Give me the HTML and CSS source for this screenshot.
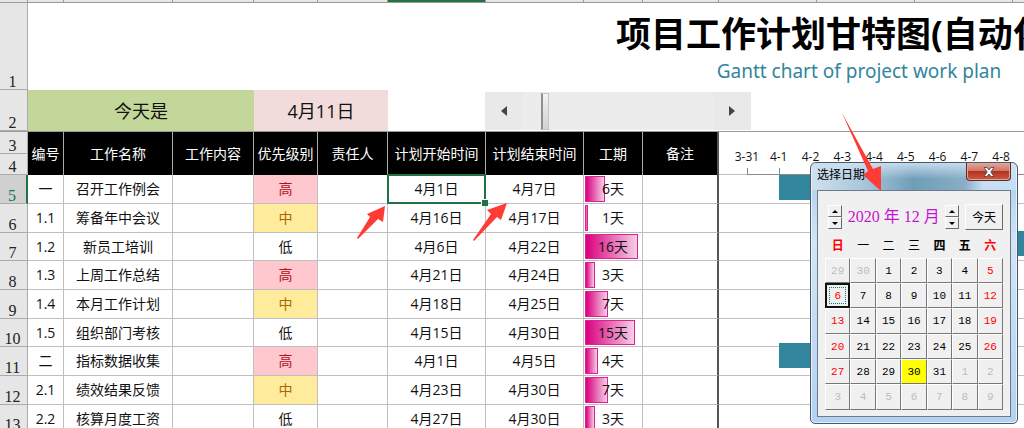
FILE: index.html
```html
<!DOCTYPE html>
<html lang="zh-CN">
<head>
    <meta charset="UTF-8">
    <meta name="viewport" content="width=device-width, initial-scale=1.0">
    <title>项目工作计划甘特图</title>
    <link rel="stylesheet" href="styles.css">
</head>
<body>
    <div class="col-heads">
        <span class="w-num"></span><span class="w-id"></span><span class="w-name"></span><span class="w-content"></span><span class="w-level"></span><span class="w-owner"></span><span class="w-date active"></span><span class="w-date"></span><span class="w-days"></span><span class="w-note"></span><span class="w-date"></span><span class="w-date"></span><span class="w-date"></span>
    </div>

    <header class="row row-title">
        <div class="row-num">1</div>
        <div class="titles">
            <h1>项目工作计划甘特图(自动化)</h1>
            <p>Gantt chart of project work plan</p>
        </div>
    </header>

    <div class="row row-today">
        <div class="row-num">2</div>
        <div class="today-label">今天是</div>
        <div class="today-date">4月11日</div>
        <div class="scroller">
            <button type="button" aria-label="向左"><svg width="6" height="10" viewBox="0 0 6 10"><path d="M6 0v10L0 5z" fill="#444"/></svg></button>
            <input type="range" min="0" max="100" value="10" aria-label="滚动日期">
            <button type="button" aria-label="向右"><svg width="6" height="10" viewBox="0 0 6 10"><path d="M0 0v10l6-5z" fill="#444"/></svg></button>
        </div>
    </div>

    <main class="plan">
        <table class="tasks">
            <colgroup>
                <col class="w-num"><col class="w-id"><col class="w-name"><col class="w-content"><col class="w-level"><col class="w-owner"><col class="w-date"><col class="w-date"><col class="w-days"><col class="w-note">
            </colgroup>
            <thead>
                <tr>
                    <th class="row-num">3</th>
                    <th rowspan="2">编号</th>
                    <th rowspan="2">工作名称</th>
                    <th rowspan="2">工作内容</th>
                    <th rowspan="2">优先级别</th>
                    <th rowspan="2">责任人</th>
                    <th rowspan="2">计划开始时间</th>
                    <th rowspan="2">计划结束时间</th>
                    <th rowspan="2">工期</th>
                    <th rowspan="2">备注</th>
                </tr>
                <tr><th class="row-num">4</th></tr>
            </thead>
            <tbody>
                <tr><th class="row-num active">5</th><td>一</td><td>召开工作例会</td><td></td><td class="high">高</td><td></td><td class="selected">4月1日</td><td>4月7日</td><td class="days"><i style="width: 34%"></i><span>6天</span></td><td></td></tr>
                <tr><th class="row-num">6</th><td>1.1</td><td>筹备年中会议</td><td></td><td class="mid">中</td><td></td><td>4月16日</td><td>4月17日</td><td class="days"><i style="width: 5%"></i><span>1天</span></td><td></td></tr>
                <tr><th class="row-num">7</th><td>1.2</td><td>新员工培训</td><td></td><td>低</td><td></td><td>4月6日</td><td>4月22日</td><td class="days"><i style="width: 92%"></i><span>16天</span></td><td></td></tr>
                <tr><th class="row-num">8</th><td>1.3</td><td>上周工作总结</td><td></td><td class="high">高</td><td></td><td>4月21日</td><td>4月24日</td><td class="days"><i style="width: 17%"></i><span>3天</span></td><td></td></tr>
                <tr><th class="row-num">9</th><td>1.4</td><td>本月工作计划</td><td></td><td class="mid">中</td><td></td><td>4月18日</td><td>4月25日</td><td class="days"><i style="width: 40%"></i><span>7天</span></td><td></td></tr>
                <tr><th class="row-num">10</th><td>1.5</td><td>组织部门考核</td><td></td><td>低</td><td></td><td>4月15日</td><td>4月30日</td><td class="days"><i style="width: 86%"></i><span>15天</span></td><td></td></tr>
                <tr><th class="row-num">11</th><td>二</td><td>指标数据收集</td><td></td><td class="high">高</td><td></td><td>4月1日</td><td>4月5日</td><td class="days"><i style="width: 23%"></i><span>4天</span></td><td></td></tr>
                <tr><th class="row-num">12</th><td>2.1</td><td>绩效结果反馈</td><td></td><td class="mid">中</td><td></td><td>4月23日</td><td>4月30日</td><td class="days"><i style="width: 40%"></i><span>7天</span></td><td></td></tr>
                <tr><th class="row-num">13</th><td>2.2</td><td>核算月度工资</td><td></td><td>低</td><td></td><td>4月27日</td><td>4月30日</td><td class="days"><i style="width: 17%"></i><span>3天</span></td><td></td></tr>
            </tbody>
        </table>

        <section class="chart">
            <div class="axis">
                <span>3-31</span><span>4-1</span><span>4-2</span><span>4-3</span><span>4-4</span><span>4-5</span><span>4-6</span><span>4-7</span><span>4-8</span>
            </div>
            <div class="lines">
                <div></div><div></div><div></div><div></div><div></div><div></div><div></div><div></div><div></div>
            </div>
            <!-- 每列一天，从 3-31 开始 -->
            <div class="bars">
                <div><i style="margin-left: 16.7%; width: 66.7%"></i></div>
                <div></div>
                <div><i style="margin-left: 72.2%; width: 40%"></i></div>
                <div></div>
                <div></div>
                <div></div>
                <div><i style="margin-left: 16.7%; width: 44.4%"></i></div>
            </div>
        </section>
    </main>

    <section class="dialog" role="dialog" aria-labelledby="dialog-title">
        <div class="dialog-bar">
            <h2 id="dialog-title">选择日期</h2>
            <button type="button" class="close" aria-label="关闭">
                <svg width="12" height="10" viewBox="0 0 12 10"><path d="M1 .5h3L6 3 8 .5h3L7.8 5 11 9.500H8L6 7 4 9.500H1L4.200 5z" fill="#fff" stroke="#5b5260" stroke-width="1"/></svg>
            </button>
        </div>
        <div class="dialog-body">
            <div class="month">
                <div class="spin">
                    <button type="button" aria-label="下一年"><svg width="6" height="3" viewBox="0 0 6 3"><path d="M3 0l3 3H0z"/></svg></button>
                    <button type="button" aria-label="上一年"><svg width="6" height="3" viewBox="0 0 6 3"><path d="M0 0h6L3 3z"/></svg></button>
                </div>
                <span class="month-text">2020 年 12 月</span>
                <div class="spin">
                    <button type="button" aria-label="下个月"><svg width="6" height="3" viewBox="0 0 6 3"><path d="M3 0l3 3H0z"/></svg></button>
                    <button type="button" aria-label="上个月"><svg width="6" height="3" viewBox="0 0 6 3"><path d="M0 0h6L3 3z"/></svg></button>
                </div>
                <button type="button" class="today">今天</button>
            </div>
            <table class="calendar">
                <thead>
                    <tr><th class="rest">日</th><th class="thin">一</th><th class="thin">二</th><th class="thin">三</th><th>四</th><th>五</th><th class="rest">六</th></tr>
                </thead>
                <tbody>
                    <tr><td><button class="other">29</button></td><td><button class="other">30</button></td><td><button>1</button></td><td><button>2</button></td><td><button>3</button></td><td><button>4</button></td><td><button class="rest">5</button></td></tr>
                    <tr><td><button class="rest focused">6</button></td><td><button>7</button></td><td><button>8</button></td><td><button>9</button></td><td><button>10</button></td><td><button>11</button></td><td><button class="rest">12</button></td></tr>
                    <tr><td><button class="rest">13</button></td><td><button>14</button></td><td><button>15</button></td><td><button>16</button></td><td><button>17</button></td><td><button>18</button></td><td><button class="rest">19</button></td></tr>
                    <tr><td><button class="rest">20</button></td><td><button>21</button></td><td><button>22</button></td><td><button>23</button></td><td><button>24</button></td><td><button>25</button></td><td><button class="rest">26</button></td></tr>
                    <tr><td><button class="rest">27</button></td><td><button>28</button></td><td><button>29</button></td><td><button class="now">30</button></td><td><button>31</button></td><td><button class="other">1</button></td><td><button class="other">2</button></td></tr>
                    <tr><td><button class="other">3</button></td><td><button class="other">4</button></td><td><button class="other">5</button></td><td><button class="other">6</button></td><td><button class="other">7</button></td><td><button class="other">8</button></td><td><button class="other">9</button></td></tr>
                </tbody>
            </table>
        </div>
    </section>

    <svg class="arrow arrow-start" width="28" height="34" viewBox="0 0 28 34"><path d="M28 0L26 16 21 13 1 33 0 32 13 11 10 8z"/></svg>
    <svg class="arrow arrow-end" width="34" height="38" viewBox="0 0 34 38"><path d="M34 0L28 17 24 14 1 38 0 37 18 11 14 7z"/></svg>
    <svg class="arrow arrow-dialog" width="40" height="78" viewBox="0 0 40 78"><path d="M0 0L31 56 39 53V78L21 62 26 58z"/></svg>
</body>
</html>
```
FILE: styles.css
```css
* {
    box-sizing: border-box;
}
body {
    margin: 0;
    height: 100vh;
    overflow: hidden;
    position: relative;
    background: #fff;
    color: #111;
    font-family: "Open Sans", "Noto Sans CJK SC", sans-serif;
    font-size: 14px;
}
button {
    margin: 0;
    padding: 0;
    border: 0;
    display: flex;
    align-items: center;
    justify-content: center;
    font-family: inherit;
    color: #000;
}

/* column widths */
.w-num { width: 28px; }
.w-id { width: 36px; }
.w-name { width: 109px; }
.w-content { width: 81px; }
.w-level { width: 64px; }
.w-owner { width: 70px; }
.w-date { width: 98px; }
.w-days { width: 59px; }
.w-note { width: 76px; }

.col-heads {
    display: flex;
    height: 3px;
    overflow: hidden;
    background: #e6e6e6;
    border-bottom: 1px solid #9b9b9b;
}
.col-heads span {
    flex: none;
    border-right: 1px solid #9b9b9b;
}
.col-heads .active {
    height: 3px;
    background: #217346;
}

.row {
    display: flex;
}
.row-num {
    flex: none;
    width: 28px;
    display: flex;
    align-items: flex-end;
    justify-content: center;
    padding-right: 2px;
    background: #e6e6e6;
    border-right: 1px solid #ababab;
    border-bottom: 1px solid #ababab;
    font-family: "Liberation Serif", serif;
    font-size: 16px;
    line-height: 14px;
    color: #222;
}
.row-title {
    height: 87px;
}
.titles {
    flex: 1;
    min-width: 0;
    overflow: hidden;
    padding: 7px 0 0 588px;
    white-space: nowrap;
}
.titles h1 {
    margin: 0;
    font-size: 35px;
    line-height: 48px;
    color: #000;
}
.titles p {
    margin: 0;
    width: 486px;
    text-align: center;
    font-family: "Noto Sans", sans-serif;
    font-size: 19px;
    line-height: 26px;
    color: #31859c;
}
.row-today {
    height: 42px;
    border-bottom: 1px solid #999;
}
.today-label,
.today-date {
    display: flex;
    align-items: center;
    justify-content: center;
    padding-bottom: 2px;
    font-size: 18px;
}
.today-label {
    width: 226px;
    background: #c4d79b;
}
.today-date {
    width: 134px;
    background: #f2dcdb;
}
.scroller {
    display: flex;
    width: 266px;
    height: 38px;
    margin: 2px 0 0 97px;
    background: #ececec;
}
.scroller button {
    width: 38px;
    background: #e9e9e9;
}
.scroller input {
    flex: 1;
    min-width: 0;
    margin: 0;
    appearance: none;
    background: none;
}
.scroller input::-webkit-slider-thumb {
    appearance: none;
    width: 8px;
    height: 37px;
    border: 1px solid #c4c4c4;
    border-left: 2px solid #8f8f8f;
    background: linear-gradient(#f2f2f2, #d2d2d2);
}

.plan {
    display: flex;
    align-items: flex-start;
}
.tasks {
    flex: none;
    width: 719px;
    table-layout: fixed;
    border-collapse: separate;
    border-spacing: 0;
}
.tasks th,
.tasks td {
    padding: 0;
    text-align: center;
    font-weight: normal;
    line-height: 20px;
}
.tasks thead tr {
    height: 21px;
}
.tasks thead tr:first-child {
    height: 22px;
}
.tasks thead th {
    background: #000;
    color: #fff;
    border-right: 1px solid #ababab;
}
.tasks thead th:last-child {
    border-right: 2px solid #555;
}
.tasks tbody tr {
    height: 29px;
}
.tasks tbody tr:nth-child(3n) {
    height: 28px;
}
.tasks td {
    border-right: 1px solid #bfbfbf;
    border-bottom: 1px solid #bfbfbf;
}
.tasks td:last-child {
    border-right: 2px solid #555;
}
.tasks .row-num,
.tasks thead .row-num:last-child {
    display: table-cell;
    vertical-align: bottom;
    padding-right: 2px;
    line-height: 14px;
    background: #e6e6e6;
    color: #222;
    border-right: 1px solid #ababab;
    border-bottom: 1px solid #ababab;
}
.tasks .row-num.active {
    background: #d0d0d0;
    color: #217346;
    border-right: 2px solid #217346;
}
.tasks .high {
    background: #ffc7ce;
    color: #b3101c;
}
.tasks .mid {
    background: #ffeb9c;
    color: #a86a00;
}
.selected {
    position: relative;
}
.selected::before {
    content: "";
    position: absolute;
    inset: -1px;
    border: 2px solid #217346;
}
.selected::after {
    content: "";
    position: absolute;
    right: -3px;
    bottom: -3px;
    width: 6px;
    height: 6px;
    background: #217346;
    border: 1px solid #fff;
    border-width: 1px 0 0 1px;
}

/* data bars behind the day count */
.days {
    position: relative;
}
.days i {
    position: absolute;
    left: 1px;
    top: 1px;
    bottom: 1px;
    border: 1px solid #e0218f;
    background: linear-gradient(90deg, #d9007e, #f6cfe7);
}
.days span {
    position: relative;
}

.chart {
    flex: 1;
    min-width: 0;
    position: relative;
    overflow: hidden;
}
.axis {
    display: flex;
    height: 43px;
    padding: 16px 7px 0 12px;
    border-bottom: 1px solid #bfbfbf;
    font-size: 12px;
    line-height: 18px;
}
.axis span {
    flex: 1;
    min-width: 0;
    position: relative;
    display: flex;
    justify-content: center;
}
/* tick mark and the axis line running to the next day */
.axis span::after {
    content: "";
    position: absolute;
    left: 50%;
    bottom: -1px;
    width: 100%;
    height: 6px;
    border-left: 1px solid #8a8a8a;
    border-bottom: 1px solid #8a8a8a;
}
.lines div {
    height: 29px;
    border-bottom: 1px solid #bfbfbf;
}
.lines div:nth-child(3n) {
    height: 28px;
}
.bars {
    position: absolute;
    top: 43px;
    left: 12px;
    right: 7px;
}
.bars div {
    height: 28px;
}
.bars i {
    display: block;
    height: 25px;
    background: #31859c;
}

.dialog {
    position: absolute;
    left: 810px;
    top: 162px;
    width: 208px;
    padding: 0 6px 6px;
    border: 1px solid #4b5866;
    border-radius: 6px 6px 5px 5px;
    background: linear-gradient(#c2d8ec, #b9d3ee 30px, #d3e5f7 80px, #b2d1f2);
    box-shadow: inset 0 0 0 1px #e6f1fb;
}
.dialog-bar {
    display: flex;
    justify-content: space-between;
    height: 27px;
    margin: 0 -5px;
    border-radius: 5px 5px 0 0;
    background:
        linear-gradient(rgba(206, 225, 242, 0.9), rgba(206, 225, 242, 0) 60%),
        linear-gradient(90deg, #cfe0ee, #a9c6d9 25%, #6f9db8 50%, #8aaec6 75%, #c7dff4 84%);
}
.dialog-bar h2 {
    margin: 0;
    padding-left: 5px;
    font-size: 12px;
    font-weight: normal;
    line-height: 24px;
    color: #000;
}
.close {
    width: 45px;
    height: 18px;
    margin-right: 5px;
    border: 1px solid #5a2a2a;
    border-top: 0;
    border-radius: 0 0 4px 4px;
    background: linear-gradient(#e2a79c, #cf7567 45%, #b3331f 50%, #cf5a40);
    box-shadow: inset 0 0 0 1px #e3a596;
}
.dialog-body {
    padding: 13px 7px 6px;
    border: 1px solid #6b7a88;
    background: #f0f0f0;
}
.month {
    display: flex;
    align-items: center;
    justify-content: space-between;
    padding-left: 3px;
}
.month button {
    background: #f0f0f0;
    border: 1px solid;
    border-color: #fff #696969 #696969 #fff;
}
.spin {
    display: flex;
    flex-direction: column;
}
.spin button {
    width: 14px;
    height: 12px;
}
.month-text {
    font-family: "Liberation Serif", "Noto Sans CJK SC", serif;
    font-size: 16px;
    line-height: 24px;
    color: #c812d4;
}
.month .today {
    width: 38px;
    height: 26px;
    font-size: 12px;
}
.calendar {
    width: 100%;
    table-layout: fixed;
    border-collapse: collapse;
    margin-top: 4px;
}
.calendar th {
    height: 24px;
    padding: 0;
    font-size: 12px;
    line-height: 24px;
    color: #000;
}
.calendar .thin {
    font-weight: normal;
}
.calendar td {
    height: 25px;
    padding: 0;
}
.calendar button {
    width: 100%;
    height: 25px;
    background: #f0f0f0;
    border: 1px solid;
    border-color: #fff #777 #777 #fff;
    font-family: "Liberation Mono", monospace;
    font-size: 11px;
}
.calendar tr:nth-child(3n) td,
.calendar tr:nth-child(3n) button {
    height: 26px;
}
.calendar .rest {
    color: #f00;
}
.calendar .other {
    color: #bdbdbd;
}
.calendar .now {
    background: #ff0;
}
.calendar .focused {
    border: 2px solid #111;
    outline: 1px dotted #008080;
    outline-offset: -5px;
}

.arrow {
    position: absolute;
    fill: #ff3b36;
}
.arrow-start {
    left: 357px;
    top: 206px;
}
.arrow-end {
    left: 473px;
    top: 203px;
}
.arrow-dialog {
    left: 842px;
    top: 113px;
}
```
